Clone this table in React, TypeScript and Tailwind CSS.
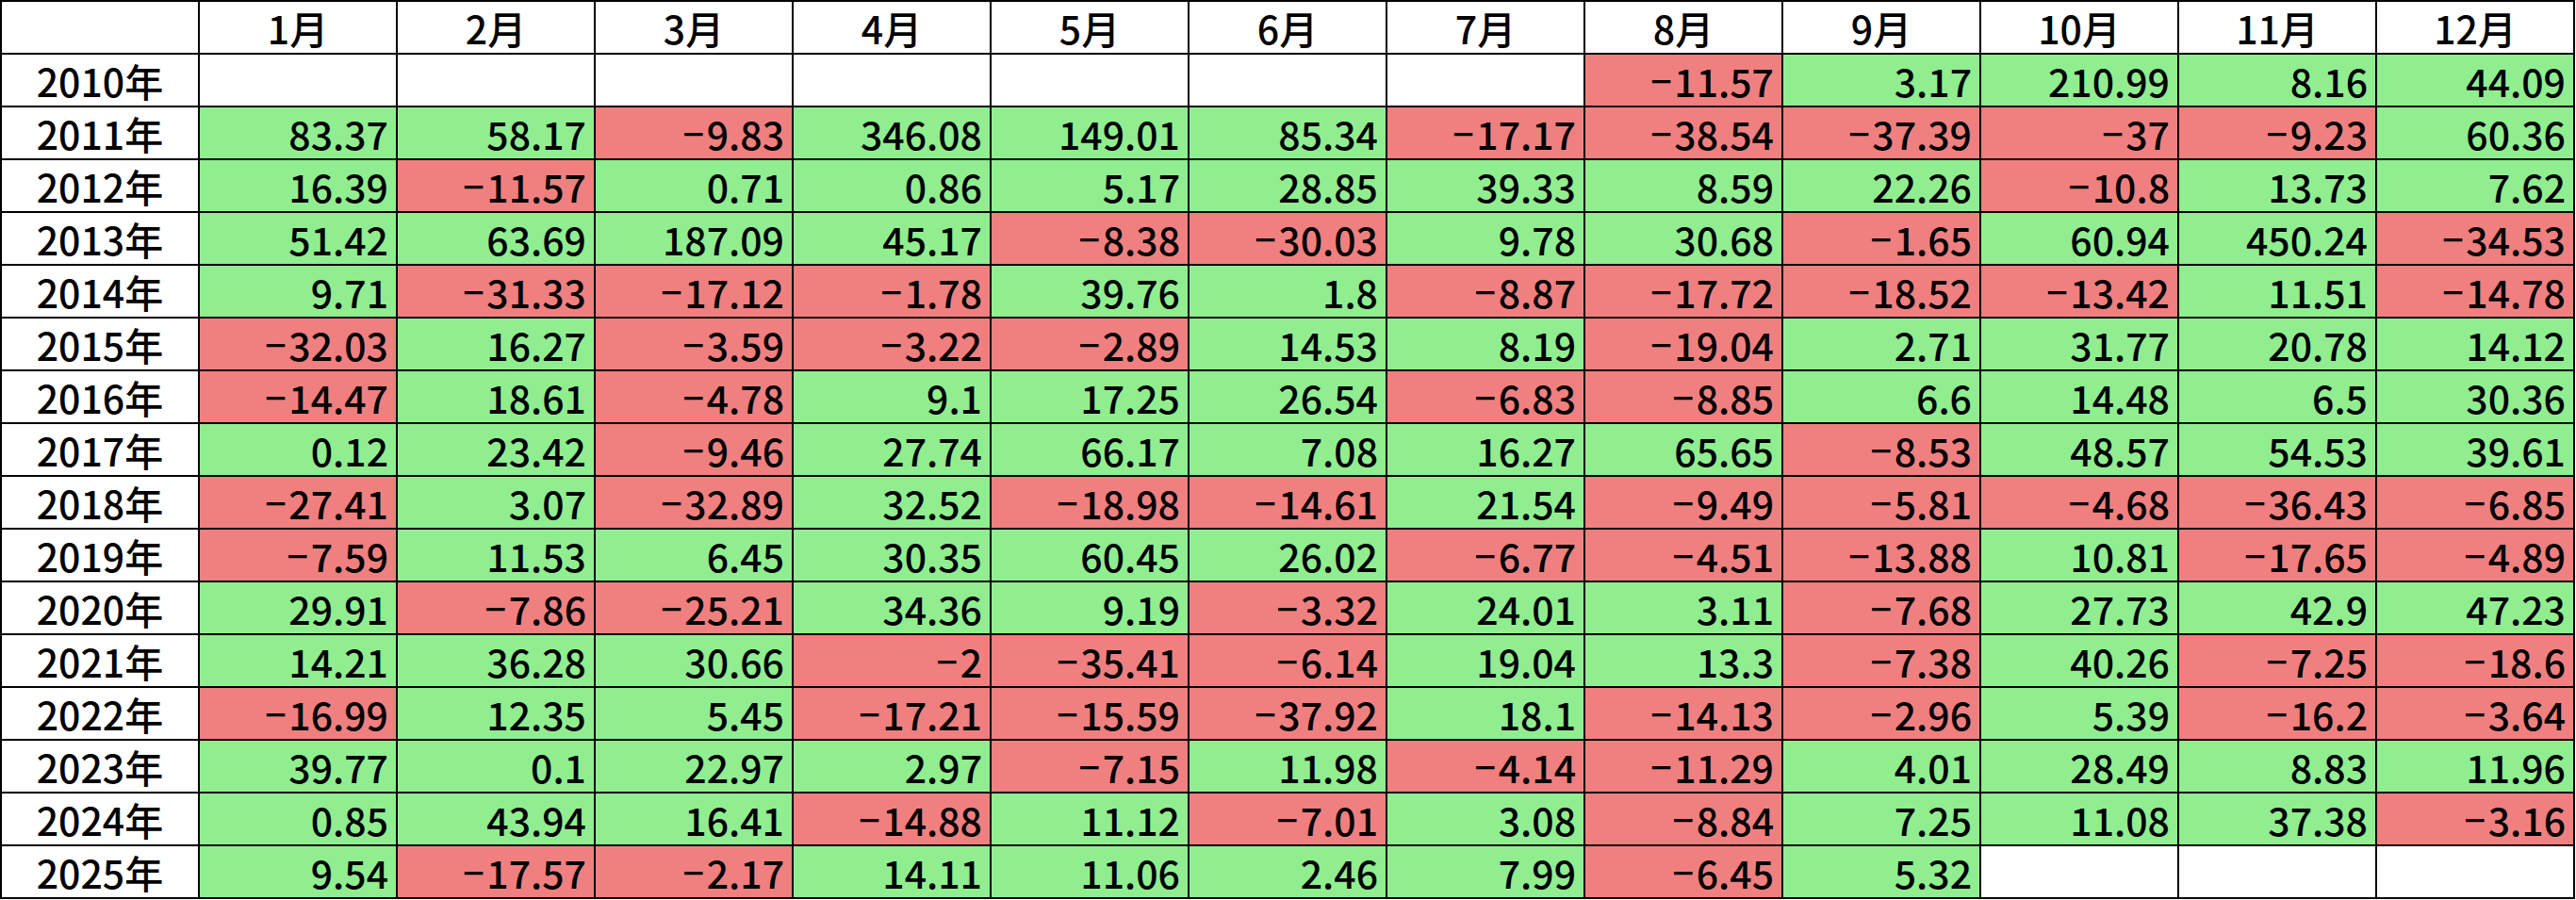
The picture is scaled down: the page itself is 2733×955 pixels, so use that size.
const months = ["1月", "2月", "3月", "4月", "5月", "6月", "7月", "8月", "9月", "10月", "11月", "12月"];

type Cell = number | null;

const rows: [string, Cell[]][] = [
  ["2010年", [null, null, null, null, null, null, null, -11.57, 3.17, 210.99, 8.16, 44.09]],
  ["2011年", [83.37, 58.17, -9.83, 346.08, 149.01, 85.34, -17.17, -38.54, -37.39, -37, -9.23, 60.36]],
  ["2012年", [16.39, -11.57, 0.71, 0.86, 5.17, 28.85, 39.33, 8.59, 22.26, -10.8, 13.73, 7.62]],
  ["2013年", [51.42, 63.69, 187.09, 45.17, -8.38, -30.03, 9.78, 30.68, -1.65, 60.94, 450.24, -34.53]],
  ["2014年", [9.71, -31.33, -17.12, -1.78, 39.76, 1.8, -8.87, -17.72, -18.52, -13.42, 11.51, -14.78]],
  ["2015年", [-32.03, 16.27, -3.59, -3.22, -2.89, 14.53, 8.19, -19.04, 2.71, 31.77, 20.78, 14.12]],
  ["2016年", [-14.47, 18.61, -4.78, 9.1, 17.25, 26.54, -6.83, -8.85, 6.6, 14.48, 6.5, 30.36]],
  ["2017年", [0.12, 23.42, -9.46, 27.74, 66.17, 7.08, 16.27, 65.65, -8.53, 48.57, 54.53, 39.61]],
  ["2018年", [-27.41, 3.07, -32.89, 32.52, -18.98, -14.61, 21.54, -9.49, -5.81, -4.68, -36.43, -6.85]],
  ["2019年", [-7.59, 11.53, 6.45, 30.35, 60.45, 26.02, -6.77, -4.51, -13.88, 10.81, -17.65, -4.89]],
  ["2020年", [29.91, -7.86, -25.21, 34.36, 9.19, -3.32, 24.01, 3.11, -7.68, 27.73, 42.9, 47.23]],
  ["2021年", [14.21, 36.28, 30.66, -2, -35.41, -6.14, 19.04, 13.3, -7.38, 40.26, -7.25, -18.6]],
  ["2022年", [-16.99, 12.35, 5.45, -17.21, -15.59, -37.92, 18.1, -14.13, -2.96, 5.39, -16.2, -3.64]],
  ["2023年", [39.77, 0.1, 22.97, 2.97, -7.15, 11.98, -4.14, -11.29, 4.01, 28.49, 8.83, 11.96]],
  ["2024年", [0.85, 43.94, 16.41, -14.88, 11.12, -7.01, 3.08, -8.84, 7.25, 11.08, 37.38, -3.16]],
  ["2025年", [9.54, -17.57, -2.17, 14.11, 11.06, 2.46, 7.99, -6.45, 5.32, null, null, null]],
];

function ValueCell({ v }: { v: Cell }) {
  if (v === null) return <div className="bg-white" />;
  const neg = v < 0;
  return (
    <div className={`flex items-center justify-end pr-2 ${neg ? "bg-[#f08080]" : "bg-[#90ee90]"}`}>
      {neg && <span className="font-['Noto_Sans'] mr-[2px]">−</span>}
      {Math.abs(v)}
    </div>
  );
}

export default function App() {
  return (
    <div className="w-[2733px] h-[955px] bg-white font-['Noto_Sans_CJK_JP',sans-serif] text-[41px] font-medium text-black leading-none">
      <div className="grid grid-cols-[repeat(13,208px)] auto-rows-[54px] gap-[2px] p-[2px] bg-black w-fit">
        <div className="bg-white" />
        {months.map((m) => (
          <div key={m} className="bg-white flex items-center justify-center">{m}</div>
        ))}
        {rows.map(([year, vals]) => (
          <>
            <div key={year} className="bg-white flex items-center justify-center">{year}</div>
            {vals.map((v, i) => (
              <ValueCell key={year + i} v={v} />
            ))}
          </>
        ))}
      </div>
    </div>
  );
}
